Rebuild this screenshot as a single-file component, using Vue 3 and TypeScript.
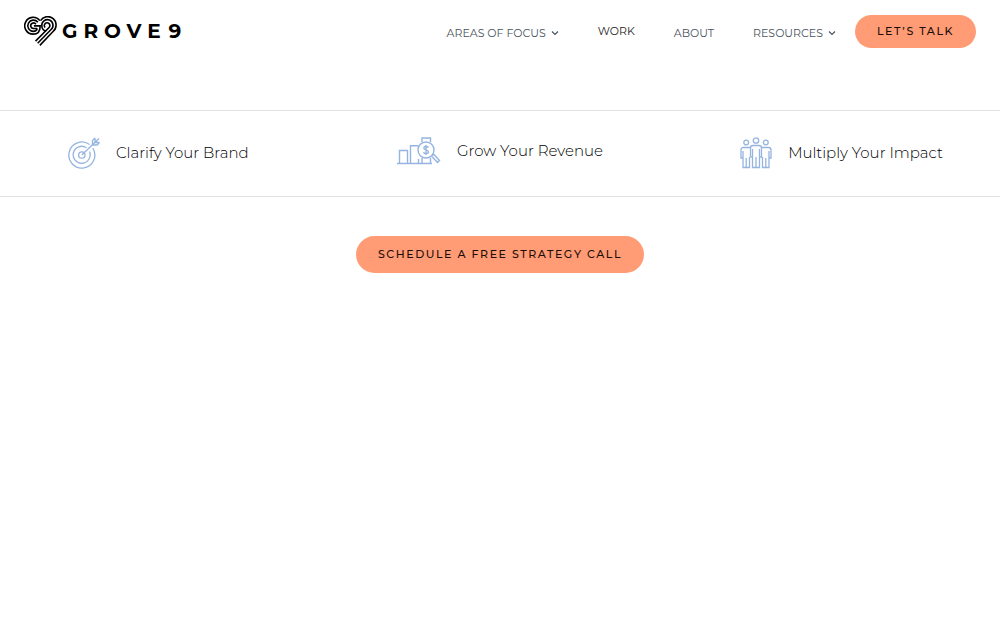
<script setup lang="ts">
interface NavItem { label: string; menu: boolean; raised: boolean }

const nav: NavItem[] = [
  { label: 'AREAS OF FOCUS', menu: true, raised: false },
  { label: 'WORK', menu: false, raised: true },
  { label: 'ABOUT', menu: false, raised: false },
  { label: 'RESOURCES', menu: true, raised: false },
]
</script>

<template>
  <div class="page">
    <header class="header">
      <a class="brand" href="#" aria-label="Grove 9">
        <svg class="mark" viewBox="0 0 100 92" fill="none" stroke="#000" stroke-width="4.8">
          <path d="M48 13A25.500 25.500 0 1 0 28 54C41 54 49 46 49 29H30" />
          <path d="M42 18A17 17 0 1 0 28 45.500C35 45.500 39 42 40 37" />
          <path d="M36 24A8.500 8.500 0 1 0 30 37H40" />
          <path d="M35 75L76 34A8.500 8.500 0 1 0 64 34" />
          <path d="M41.500 81.500L82 40A17 17 0 1 0 54 29C54 38 60 45 67 44" />
          <path d="M48 88L88 46A25.500 25.500 0 1 0 50 13" />
        </svg>
        <span class="wordmark">GROVE<span class="nine">9</span></span>
      </a>
      <nav class="nav" aria-label="Main">
        <a v-for="item in nav" :key="item.label" href="#" :class="{ raised: item.raised }">
          {{ item.label }}
          <svg v-if="item.menu" class="chevron" viewBox="0 0 8 6" fill="none" stroke="currentColor" stroke-width="1.2">
            <path d="M1 1.500L4 4.500L7 1.500" />
          </svg>
        </a>
      </nav>
      <button class="pill talk" type="button">LET’S TALK</button>
    </header>

    <main>
      <section class="benefits">
        <div class="benefit brand-benefit">
          <svg width="32" height="32" viewBox="0 0 32 32" fill="none" stroke="#96b4e0" stroke-width="1.3">
            <path d="M21.500 7.500A13 13 0 1 0 24.800 11M18.500 10.800A8.500 8.500 0 1 0 21.500 14.500" />
            <circle cx="13.800" cy="18" r="3.200" />
            <path d="M13.800 18L31 1.500M24.500 8V3.500L27 1M24.500 8H29L31.500 5.500M27 1V5.500H31.500" />
          </svg>
          <span>Clarify Your Brand</span>
        </div>
        <div class="benefit revenue">
          <svg width="44" height="28" viewBox="0 0 44 28" fill="none" stroke="#96b4e0" stroke-width="1.4">
            <path d="M0 26.500H35M2.500 26.500V13.500H10.500V26.500M13.500 26.500V8.700H21.500M21.500 22V26.500M25 5V1H33.500V5M25 21V26.500M33.500 21V26.500" />
            <circle cx="29" cy="13" r="8" />
            <path d="M34.500 19L36.500 17L42.500 23.500L40.500 25.500L34.500 19M31.500 10.500C31 9.200 27 9 26.800 11C26.600 13.500 31.700 12.400 31.500 15C31.300 17.200 27 17 26.500 15.200M29 8V18" />
          </svg>
          <span>Grow Your Revenue</span>
        </div>
        <div class="benefit impact">
          <svg width="32" height="32" viewBox="0 0 32 32" fill="none" stroke="#96b4e0" stroke-width="1.3">
            <circle cx="16" cy="3.500" r="2.700" />
            <circle cx="6.200" cy="5.500" r="2.400" />
            <circle cx="25.800" cy="5.500" r="2.400" />
            <path d="M10.500 20V11Q10.500 8.500 13 8.500H19Q21.500 8.500 21.500 11V20H19.500V30.500H12.500V20H10.500M12.500 12V20M19.500 12V20M16 20V30.500" />
            <path d="M10.500 10.500H3.500Q1 10.500 1 13V21H3V30.500H9.500V20M3 14V21M6.200 21V30.500M21.500 10.500H28.500Q31 10.500 31 13V21H29V30.500H22.500V20M29 14V21M25.800 21V30.500" />
          </svg>
          <span>Multiply Your Impact</span>
        </div>
      </section>
      <div class="cta">
        <button class="pill schedule" type="button">SCHEDULE A FREE STRATEGY CALL</button>
      </div>
    </main>
  </div>
</template>

<style>
body {
  margin: 0;
  background: #fff;
}
</style>

<style scoped>
.page {
  font-family: Montserrat, Inter, "Liberation Sans", sans-serif;
  color: #000;
}
.header {
  display: flex;
  align-items: center;
  height: 62px;
  padding: 0 24px;
}
.brand {
  display: flex;
  align-items: center;
  gap: 5px;
  color: #000;
  text-decoration: none;
}
.mark {
  width: 33px;
  height: 31px;
}
.wordmark {
  font-size: 20px;
  font-weight: 700;
  line-height: 30px;
  letter-spacing: 6px;
}
.nine {
  margin-left: 2px;
}
.nav {
  display: flex;
  gap: 39px;
  margin-left: auto;
  margin-right: 19px;
  padding-top: 4px;
}
.nav a {
  display: flex;
  align-items: center;
  gap: 5px;
  color: #4a545e;
  font-size: 11px;
  line-height: 16px;
  text-decoration: none;
}
.nav .raised {
  padding-bottom: 4px;
  color: #222;
}
.chevron {
  width: 8px;
  height: 6px;
}
.pill {
  border: 0;
  border-radius: 20px;
  background: #ff9c75;
  color: #1c0d06;
  font-family: inherit;
  font-size: 11px;
  font-weight: 500;
  line-height: 17px;
  letter-spacing: 0.14em;
  white-space: nowrap;
  cursor: pointer;
}
.talk {
  padding: 8px 22px;
}
.benefits {
  display: grid;
  grid-template-columns: 1fr auto 1fr;
  margin-top: 48px;
  padding: 26px 57px 27px;
  border-top: 1px solid #e2e2e2;
  border-bottom: 1px solid #e2e2e2;
}
.benefit {
  display: flex;
  align-items: center;
  gap: 16px;
  font-size: 15px;
  font-weight: 300;
  line-height: 24px;
}
.brand-benefit {
  padding-left: 11px;
}
.revenue {
  align-self: start;
}
.impact {
  justify-self: end;
}
.cta {
  display: flex;
  justify-content: center;
  padding: 39px 24px;
}
.schedule {
  padding: 10px 22px;
}
</style>
